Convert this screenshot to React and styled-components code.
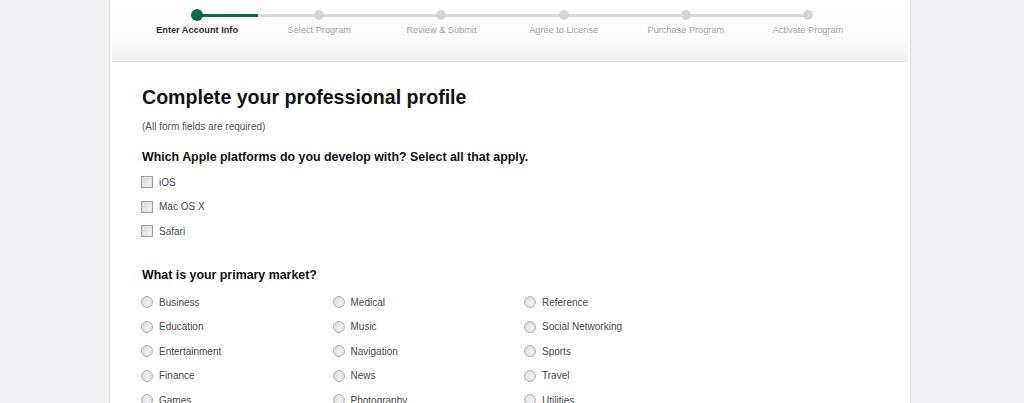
import styled, { createGlobalStyle } from "styled-components";

const GlobalStyle = createGlobalStyle`
  body {
    margin: 0;
    background: #f1f0f3;
    font-family: "Liberation Sans", Arial, sans-serif;
  }
`;

const steps = [
  "Enter Account Info",
  "Select Program",
  "Review & Submit",
  "Agree to License",
  "Purchase Program",
  "Activate Program",
];

const platforms = ["iOS", "Mac OS X", "Safari"];

const markets = [
  "Business", "Education", "Entertainment", "Finance", "Games",
  "Medical", "Music", "Navigation", "News", "Photography",
  "Reference", "Social Networking", "Sports", "Travel", "Utilities",
];

const Panel = styled.div`
  width: 800px;
  min-height: 403px;
  margin-left: 109px;
  background: #fff;
  border-left: 1px solid #dddde0;
  border-right: 1px solid #dddde0;
`;

const Header = styled.div`
  height: 61px;
  margin: 0 2px;
  background: linear-gradient(#fff 0%, #fdfcfd 65%, #efeff1 100%);
  border-bottom: 1px solid #e1e1e3;
`;

const StepRow = styled.ol`
  display: flex;
  list-style: none;
  margin: 0;
  padding: 9px 0 0 24px;
`;

const Step = styled.li`
  position: relative;
  width: 122.2px;
  display: flex;
  flex-direction: column;
  align-items: center;

  &:not(:last-child)::after {
    content: "";
    position: absolute;
    top: 5px;
    left: 50%;
    width: 100%;
    height: 3px;
    background: ${(p) =>
      p.$active
        ? "linear-gradient(90deg, #0c6a4d 50%, #d9d9db 50%)"
        : "#d9d9db"};
  }
`;

const Dot = styled.span`
  position: relative;
  z-index: 1;
  width: ${(p) => (p.$active ? "12px" : "10px")};
  height: ${(p) => (p.$active ? "12px" : "10px")};
  margin-top: ${(p) => (p.$active ? "0" : "1px")};
  margin-bottom: ${(p) => (p.$active ? "4px" : "5px")};
  border-radius: 50%;
  background: ${(p) => (p.$active ? "#0c6a4d" : "#d6d6d8")};
`;

const StepLabel = styled.span`
  font-size: 9.2px;
  line-height: 11px;
  white-space: nowrap;
  color: ${(p) => (p.$active ? "#2f3136" : "#a3a3a6")};
  font-weight: ${(p) => (p.$active ? "bold" : "normal")};
`;

const Content = styled.div`
  padding: 23px 32px 0;
`;

const Title = styled.h1`
  margin: 0;
  font-size: 19.6px;
  line-height: 24px;
  font-weight: bold;
  color: #111;
`;

const Note = styled.p`
  margin: 11px 0 0;
  font-size: 10px;
  line-height: 14px;
  color: #555;
`;

const Question = styled.h2`
  margin: ${(p) => p.$top} 0 0;
  font-size: 12.4px;
  line-height: 16px;
  font-weight: bold;
  color: #111;
`;

const CheckList = styled.div`
  margin-top: 5px;
  display: flex;
  flex-direction: column;
`;

const RadioGrid = styled.div`
  margin-top: 7px;
  display: grid;
  grid-template-columns: repeat(3, 191.5px);
  grid-template-rows: repeat(5, 24.6px);
  grid-auto-flow: column;
`;

const Option = styled.label`
  height: 24.6px;
  display: flex;
  align-items: center;
  gap: 6px;
  font-size: 10px;
  color: #4a4a4d;
`;

const Box = styled.span`
  box-sizing: border-box;
  width: 12px;
  height: 12px;
  margin-left: -1px;
  border: 1px solid #9d9d9f;
  background: linear-gradient(135deg, #d6d6d8, #f7f7f8);
  box-shadow: inset 0 0 0 1px #e4e4e6;
`;

const Round = styled.span`
  box-sizing: border-box;
  width: 12px;
  height: 12px;
  margin-left: -1px;
  border-radius: 50%;
  border: 1px solid #b4b4b6;
  background: radial-gradient(circle at 60% 60%, #f4f4f5, #d2d2d4);
`;

export default function App() {
  return (
    <>
      <GlobalStyle />
      <Panel>
        <Header>
          <StepRow>
            {steps.map((s, i) => (
              <Step key={s} $active={i === 0}>
                <Dot $active={i === 0} />
                <StepLabel $active={i === 0}>{s}</StepLabel>
              </Step>
            ))}
          </StepRow>
        </Header>
        <Content>
          <Title>Complete your professional profile</Title>
          <Note>(All form fields are required)</Note>
          <Question $top="15px">
            Which Apple platforms do you develop with? Select all that apply.
          </Question>
          <CheckList>
            {platforms.map((p) => (
              <Option key={p}>
                <Box />
                {p}
              </Option>
            ))}
          </CheckList>
          <Question $top="23px">What is your primary market?</Question>
          <RadioGrid>
            {markets.map((m) => (
              <Option key={m}>
                <Round />
                {m}
              </Option>
            ))}
          </RadioGrid>
        </Content>
      </Panel>
    </>
  );
}
